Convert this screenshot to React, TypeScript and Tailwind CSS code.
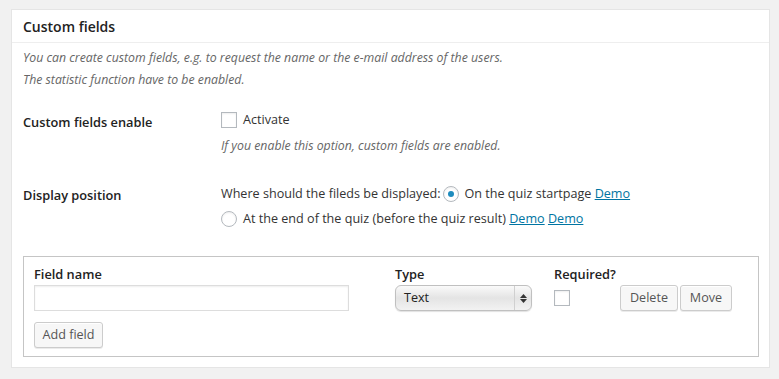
import React from "react";

const Radio = ({ checked }: { checked?: boolean }) => (
  <span className="inline-flex w-[16px] h-[16px] rounded-full border border-[#b4b9be] bg-white items-center justify-center shadow-[inset_0_1px_2px_rgba(0,0,0,0.07)]">
    {checked && <span className="w-[6px] h-[6px] rounded-full bg-[#1e8cbe]" />}
  </span>
);

const Checkbox = () => (
  <span className="inline-block w-[16px] h-[16px] border border-[#b4b9be] bg-white shadow-[inset_0_1px_2px_rgba(0,0,0,0.07)]" />
);

const Demo = () => (
  <a href="#" className="text-[#0074a2] underline">
    Demo
  </a>
);

const Button = ({ children, w }: { children: React.ReactNode; w: string }) => (
  <button
    className={`${w} h-[26px] rounded-[3px] border border-[#cccccc] bg-[#f7f7f7] text-[12.6px] text-[#555] shadow-[0_1px_0_#fff_inset,0_1px_0_rgba(0,0,0,0.08)]`}
  >
    {children}
  </button>
);

export default function App() {
  return (
    <div
      className="w-[779px] h-[379px] bg-[#f1f1f1] pt-[9px] pl-[11px] text-[12.6px] text-[#444]"
      style={{ fontFamily: '"Open Sans", "Noto Sans", sans-serif' }}
    >
      <div className="w-[759px] h-[359px] bg-white border border-[#e5e5e5]">
        {/* Header */}
        <div className="h-[33px] border-b border-[#eeeeee] pl-[11px] flex items-center">
          <h3 className="text-[14px] font-semibold text-[#222]">Custom fields</h3>
        </div>

        <div className="pl-[11px] pt-[4px]">
          <p className="italic text-[12.3px] text-[#666] leading-[22px]">
            You can create custom fields, e.g. to request the name or the e-mail address of the users.
          </p>
          <p className="italic text-[12.3px] text-[#666] leading-[22px]">
            The statistic function have to be enabled.
          </p>

          {/* Enable */}
          <div className="flex mt-[18px]">
            <div className="w-[198px] pt-[4px] text-[12.8px] font-semibold text-[#222]">Custom fields enable</div>
            <div>
              <label className="flex items-center gap-[6px] h-[22px]">
                <Checkbox />
                <span className="text-[#333]">Activate</span>
              </label>
              <p className="italic text-[12.3px] text-[#666] mt-[4px] leading-[22px]">
                If you enable this option, custom fields are enabled.
              </p>
            </div>
          </div>

          {/* Display position */}
          <div className="flex mt-[26px]">
            <div className="w-[198px] pt-[3px] text-[12.8px] font-semibold text-[#222]">Display position</div>
            <div className="text-[#333]">
              <div className="flex items-center h-[22px]">
                <span>Where should the fileds be displayed:</span>
                <span className="ml-[2px] mr-[6px] flex">
                  <Radio checked />
                </span>
                <span>
                  On the quiz startpage <Demo />
                </span>
              </div>
              <div className="flex items-center h-[22px] mt-[3px]">
                <span className="mr-[6px] flex">
                  <Radio />
                </span>
                <span>
                  At the end of the quiz (before the quiz result) <Demo /> <Demo />
                </span>
              </div>
            </div>
          </div>

          {/* Fields table */}
          <div className="mt-[26px] w-[736px] h-[101px] border border-[#c5c5c5] pl-[10px] pt-[8px]">
            <div className="flex text-[12.8px] font-semibold text-[#222] h-[19px] items-center">
              <div className="w-[361px]">Field name</div>
              <div className="w-[159px]">Type</div>
              <div>Required?</div>
            </div>
            <div className="flex items-center mt-[1px] h-[26px]">
              <input className="w-[315px] h-[26px] border border-[#dddddd] shadow-[inset_0_1px_2px_rgba(0,0,0,0.07)] outline-none" />
              <div className="ml-[46px] w-[137px] h-[26px] rounded-[6px] border border-[#c0c0c0] bg-gradient-to-b from-[#fafafa] via-[#e4e4e4] to-[#f2f2f2] flex items-center shadow-[0_1px_1px_rgba(0,0,0,0.12)]">
                <span className="flex-1 pl-[8px] text-[#222]">Text</span>
                <span className="w-[17px] h-full border-l border-[#d0d0d0] flex flex-col items-center justify-center gap-[1px]">
                  <svg width="7" height="4" viewBox="0 0 7 4">
                    <path d="M3.5 0L7 4H0z" fill="#333" />
                  </svg>
                  <svg width="7" height="4" viewBox="0 0 7 4">
                    <path d="M0 0h7L3.5 4z" fill="#333" />
                  </svg>
                </span>
              </div>
              <div className="ml-[22px] w-[66px] flex">
                <Checkbox />
              </div>
              <Button w="w-[58px]">Delete</Button>
              <div className="ml-[2px]">
                <Button w="w-[52px]">Move</Button>
              </div>
            </div>
            <div className="mt-[11px]">
              <Button w="w-[69px]">Add field</Button>
            </div>
          </div>
        </div>
      </div>
    </div>
  );
}
